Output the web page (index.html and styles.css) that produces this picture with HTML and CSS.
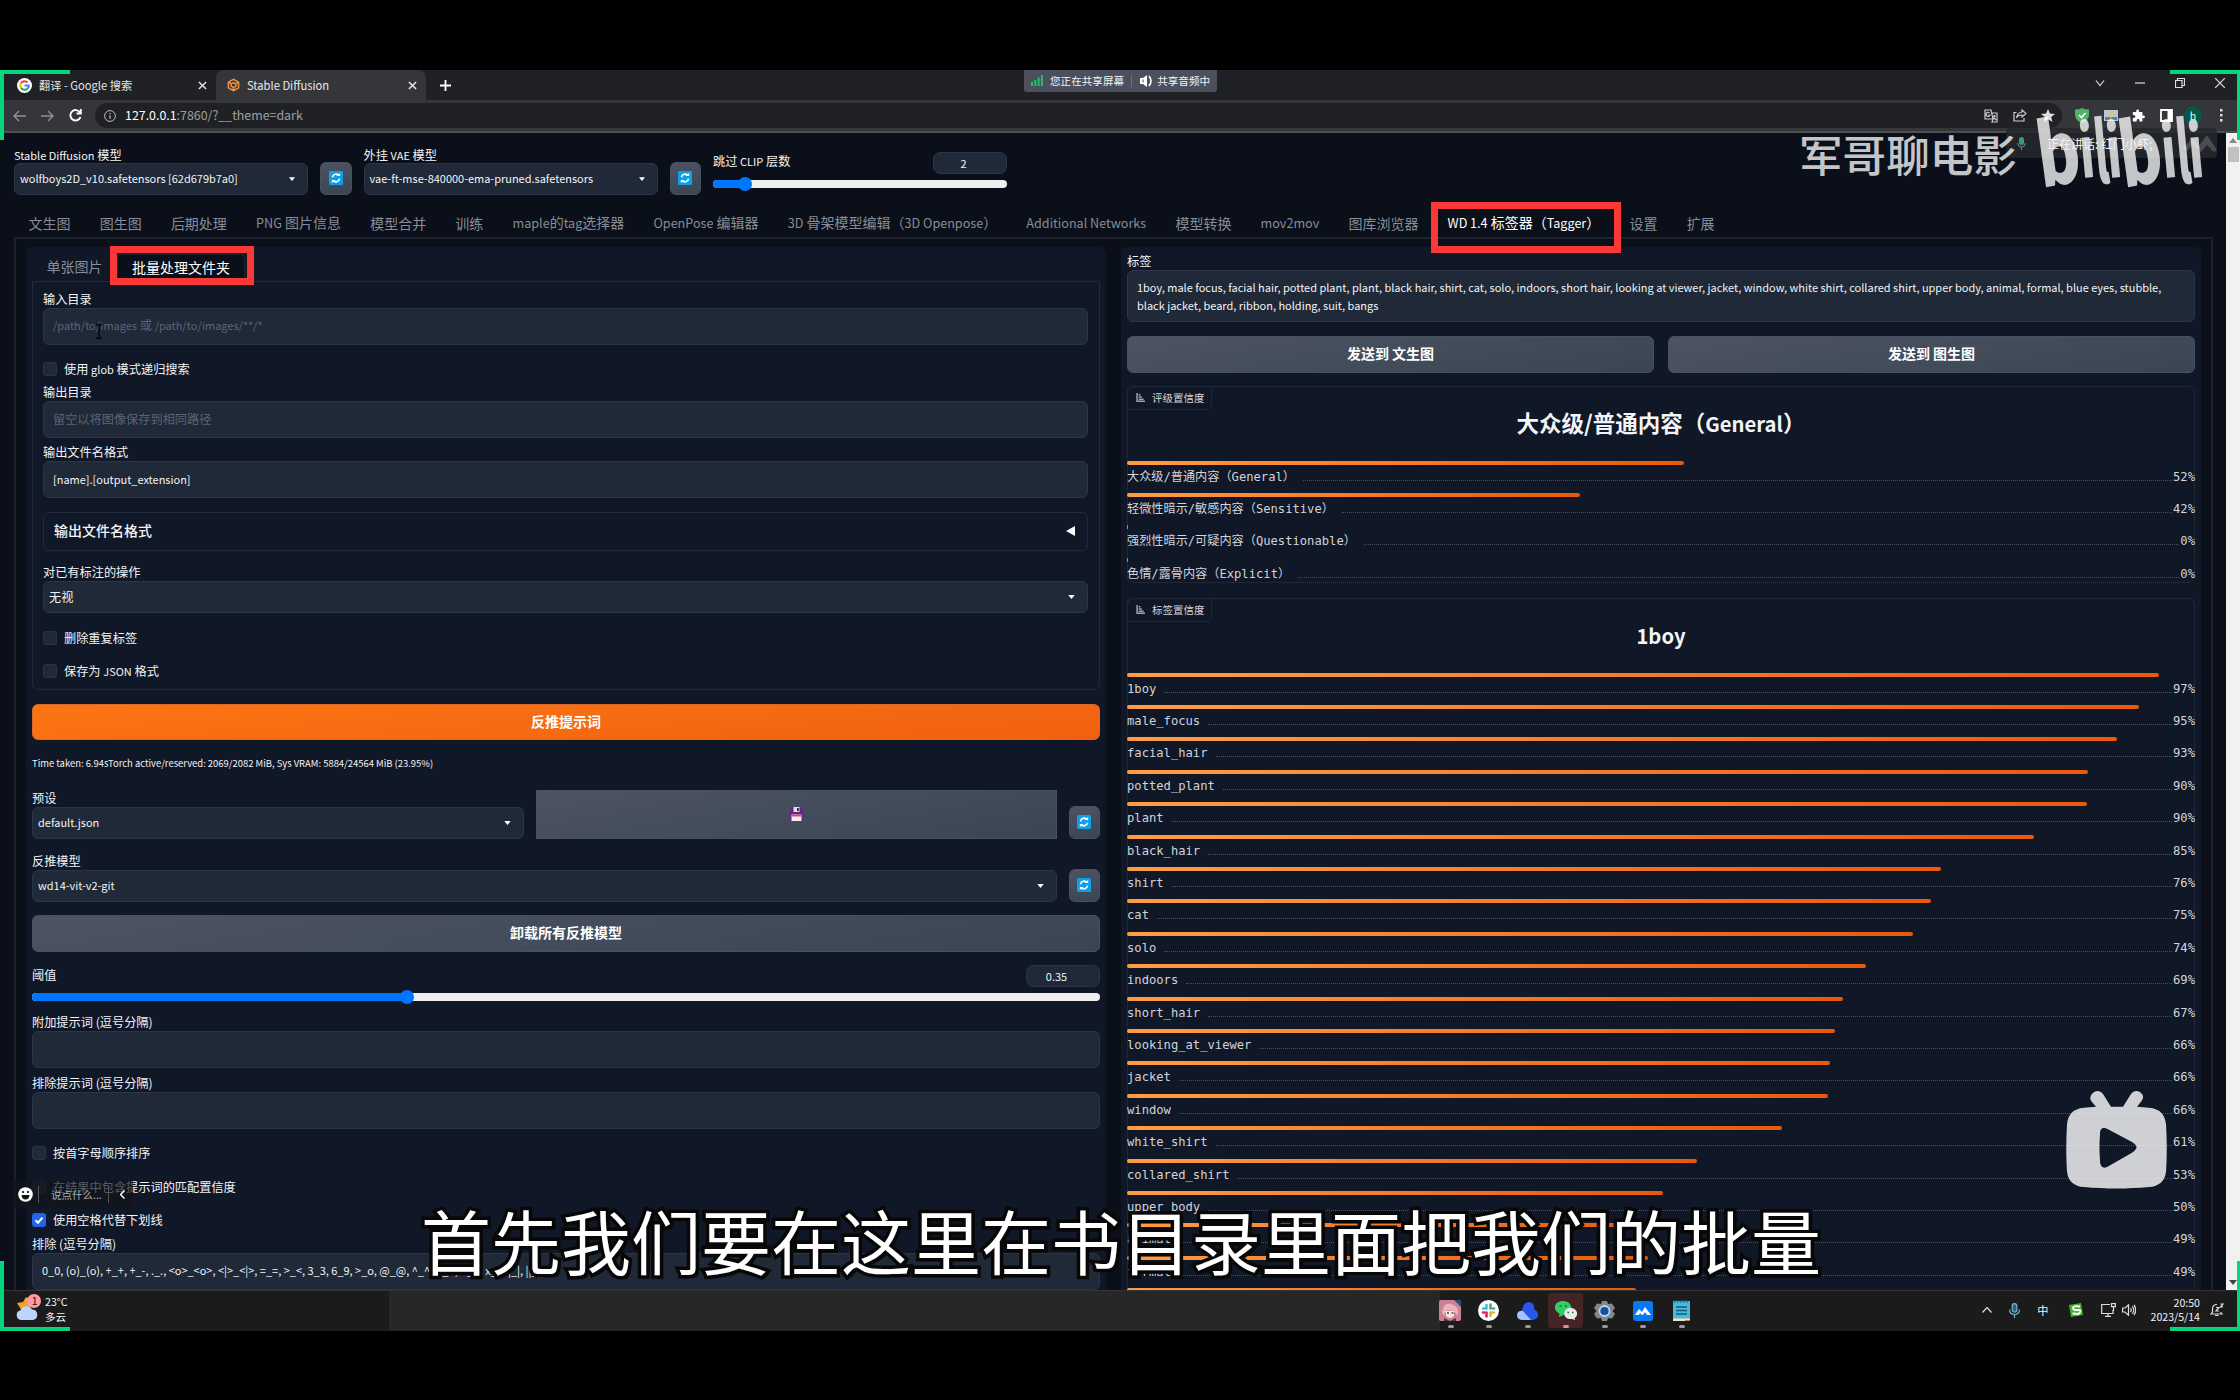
FILE: index.html
```html
<!DOCTYPE html>
<html lang="zh-CN">
<head>
<meta charset="utf-8">
<title>Stable Diffusion</title>
<link rel="stylesheet" href="styles.css">
</head>
<body>
<svg width="0" height="0" class="defs">
  <defs>
    <symbol id="refresh" viewBox="0 0 16 16"><rect width="16" height="16" rx="1.5" fill="#0f9fe8"/><path d="M4 7.2A4.2 4.2 0 0 1 11.5 5.2M12 8.8A4.2 4.2 0 0 1 4.5 10.8" fill="none" stroke="#fff" stroke-width="1.9"/><path d="M8.2 5.8h4.6V2.2zM7.8 10.2H3.2v3.6z" fill="#fff"/></symbol>
    <symbol id="caret" viewBox="0 0 8 5"><path d="M0 0h8L4 5z" fill="#fff"/></symbol>
    <symbol id="chart" viewBox="0 0 10 10"><path d="M1.2 0v9.3H10M3 2h2M3 4.500h3.500M3 7h5.500" fill="none" stroke="#9ca3af" stroke-width="1.7"/></symbol>
    <symbol id="close" viewBox="0 0 10 10"><path d="M1 1l8 8M9 1L1 9" fill="none" stroke="currentColor" stroke-width="1.6"/></symbol>
  </defs>
</svg>
<div class="screen">
  <div class="tabstrip">
    <div class="btab">
      <svg width="15" height="15" viewBox="0 0 16 16"><circle cx="8" cy="8" r="8" fill="#fff"/><g fill="none" stroke-width="2.2"><path d="M4.200 5.600A4.500 4.500 0 0 1 11.200 4.800" stroke="#ea4335"/><path d="M4.200 5.600a4.500 4.500 0 0 0 0 4.800" stroke="#fbbc05"/><path d="M4.200 10.400a4.500 4.500 0 0 0 7 .9" stroke="#34a853"/><path d="M11.200 11.300A4.500 4.500 0 0 0 12.500 8H8" stroke="#4285f4"/></g></svg>
      <span>翻译 - Google 搜索</span><svg class="x" width="9" height="9"><use href="#close"/></svg>
    </div>
    <div class="btab on">
      <svg width="13" height="14" viewBox="0 0 14 14"><path d="M7 1l5.500 3v6L7 13l-5.500-3V4zM7 4.500l2.500 1.300v2.600L7 9.700 4.500 8.400V5.800zM1.500 4l3 1.800M12.500 4l-3 1.800M7 13V9.700" fill="none" stroke="#f59342" stroke-width="1.600"/></svg>
      <span>Stable Diffusion</span><svg class="x" width="9" height="9"><use href="#close"/></svg>
    </div>
    <svg class="plus" width="11" height="11" viewBox="0 0 11 11"><path d="M5.500 0v11M0 5.500h11" stroke="#fff" stroke-width="1.800"/></svg>
    <div class="winctl">
      <svg width="10" height="10" viewBox="0 0 10 10"><path d="M1 2.500l4 5 4-5"/></svg>
      <svg width="10" height="10" viewBox="0 0 10 10"><path d="M0 5h10"/></svg>
      <svg width="10" height="10" viewBox="0 0 10 10"><path d="M.5 2.500h6.500v7H.5zM2.500 2.500V.5h7v7H7"/></svg>
      <svg width="10" height="10" viewBox="0 0 10 10"><path d="M0 0l10 10M10 0L0 10"/></svg>
    </div>
  </div>
  <div class="toolbar">
    <svg class="nav dim" width="13" height="12" viewBox="0 0 13 12"><path d="M13 6H1M6 1L1 6l5 5"/></svg>
    <svg class="nav dim" width="13" height="12" viewBox="0 0 13 12"><path d="M0 6h12M7 1l5 5-5 5"/></svg>
    <svg class="nav" width="13" height="13" viewBox="0 0 13 13"><path d="M11.500 8A5.200 5.200 0 1 1 11 3.500M11.800 0v4.500H7.500" stroke-width="1.900"/></svg>
    <div class="address">
      <svg width="12" height="12" viewBox="0 0 12 12"><path d="M6 5.500v3.300M6 3v1.300" stroke="#bbb" stroke-width="1.300"/><circle cx="6" cy="6" r="5.400" fill="none" stroke="#bbb"/></svg>
      <span><b>127.0.0.1</b>:7860/?__theme=dark</span>
      <div class="addr-icons">
        <svg width="14" height="14" viewBox="0 0 14 14"><path d="M1 1h6l2 9H1zM7 4h6v9H8l1-3M9 7h3M10.500 6v1c0 2-1 3-2 3.500M10 9l2 2M5.500 4A2 2 0 1 0 6 6H4.500" fill="none" stroke="#ccc" stroke-width="1.200"/></svg>
        <svg width="14" height="13" viewBox="0 0 14 13"><path d="M3.500 3.500H1V12h10V9M9 1l4 3.500L9 8V6C6 6 4.500 7 3.500 9 4 5.500 6 3.500 9 3z" fill="none" stroke="#ccc" stroke-width="1.200"/></svg>
        <svg width="14" height="13" viewBox="0 0 14 13"><path d="M7 0l2 4.500 5 .4-3.800 3.200L11.500 13 7 10.300 2.500 13l1.300-4.900L0 4.900l5-.4z" fill="#ddd"/></svg>
      </div>
    </div>
    <div class="ext">
      <svg width="14" height="15" viewBox="0 0 14 15"><path d="M0 1.500Q4 1.500 7 0q3 1.500 7 1.500V7q0 5-7 8Q0 12 0 7z" fill="#52b265"/><path d="M4 7l2.500 2.500L10.500 5" fill="none" stroke="#fff" stroke-width="1.600"/></svg>
      <svg width="14" height="11" viewBox="0 0 14 11"><rect width="14" height="11" fill="#b8c8d0"/><path d="M1 7h12v3H1z" fill="#4e87a8"/><path d="M8 1L5 6h2l-1 4 4-6H8z" fill="#ffc31a"/></svg>
      <svg width="13" height="13" viewBox="0 0 15 14"><path d="M1 3h4c-1-4 4-4 3 0h4v4c4-1 4 4 0 3v4H8.500c1-4-4-4-3 0H1v-4c4 0 4-3.500 0-3.500z" fill="#fff"/></svg>
      <svg width="13" height="13" viewBox="0 0 13 13"><path d="M1 1h11v11H1z" fill="none" stroke="#fff" stroke-width="1.800"/><path d="M7.500 1H12v11H7.500z" fill="#fff"/></svg>
      <span class="avatar">h</span>
      <svg width="3" height="13" viewBox="0 0 3 13"><path d="M0 0h2.500v2.500H0zM0 5h2.500v2.500H0zM0 10h2.500v2.500H0z" fill="#ddd"/></svg>
    </div>
  </div>

  <div class="page">
    <div class="content">
      <div class="quick">
        <div class="field q"><div class="label"><em>Stable Diffusion</em> 模型</div><div class="box select"><em>wolfboys2D_v10.safetensors [62d679b7a0]</em><svg width="6" height="4"><use href="#caret"/></svg></div></div>
        <div class="btn tool"><svg width="14" height="14"><use href="#refresh"/></svg></div>
        <div class="field q"><div class="label">外挂 <em>VAE</em> 模型</div><div class="box select"><em>vae-ft-mse-840000-ema-pruned.safetensors</em><svg width="6" height="4"><use href="#caret"/></svg></div></div>
        <div class="btn tool"><svg width="14" height="14"><use href="#refresh"/></svg></div>
        <div class="range q clip"><div class="range-head"><span class="cap">跳过 <em>CLIP</em> 层数</span><span class="num"><em>2</em></span></div><div class="track"><i style="width:11%"></i></div></div>
      </div>
      <div class="tabs">
        <span>文生图</span><span>图生图</span><span>后期处理</span><span><em>PNG</em> 图片信息</span><span>模型合并</span><span>训练</span><span><em>maple</em>的<em>tag</em>选择器</span><span><em>OpenPose</em> 编辑器</span><span><em>3D</em> 骨架模型编辑（<em>3D Openpose</em>）</span><span><em>Additional Networks</em></span><span>模型转换</span><span><em>mov2mov</em></span><span>图库浏览器</span><span class="on"><em>WD 1.4</em> 标签器（<em>Tagger</em>）<i class="mark mark-main"></i></span><span>设置</span><span>扩展</span>
      </div>
      <div class="columns">
        <div class="col left">
          <div class="subtabs"><span>单张图片</span><span class="on">批量处理文件夹<i class="mark mark-sub"></i></span></div>
          <div class="group">
            <div class="field"><div class="label">输入目录</div><div class="box ph"><span><em>/path/to/images</em> 或 <em>/path/to/images/**/*</em></span><svg class="ibeam" width="8" height="15" viewBox="0 0 8 15"><path d="M1 .7h6M1 14.300h6M4 1v13" stroke="#05070c" stroke-width="1.400"/></svg></div></div>
            <div class="check m175"><i></i><span>使用 <em>glob</em> 模式递归搜索</span></div>
            <div class="field m8"><div class="label">输出目录</div><div class="box ph">留空以将图像保存到相同路径</div></div>
            <div class="field m6"><div class="label">输出文件名格式</div><div class="box"><em>[name].[output_extension]</em></div></div>
            <div class="accordion">输出文件名格式<svg width="9" height="10" viewBox="0 0 9 10"><path d="M9 0v10L0 5z" fill="#fff"/></svg></div>
            <div class="field m13"><div class="label">对已有标注的操作</div><div class="box select">无视<svg width="7" height="4"><use href="#caret"/></svg></div></div>
            <div class="check m18"><i></i>删除重复标签</div>
            <div class="check m19"><i></i><span>保存为 <em>JSON</em> 格式</span></div>
          </div>
          <div class="btn primary m14">反推提示词</div>
          <div class="stats">Time taken: 6.94sTorch active/reserved: 2069/2082 MiB, Sys VRAM: 5884/24564 MiB (23.95%)</div>
          <div class="row m20">
            <div class="field preset"><div class="label">预设</div><div class="box select"><em>default.json</em><svg width="7" height="4"><use href="#caret"/></svg></div></div>
            <div class="btn save"><svg width="13" height="14" viewBox="0 0 13 14"><path d="M0 0h12l1 1.500V14H0z" fill="#5b2a86"/><path d="M3.500 0h6v5h-6z" fill="#e4dff0"/><path d="M7 1h1.800v3H7z" fill="#30204e"/><path d="M1.500 7.500h10V14h-10z" fill="#f3f0f5"/><path d="M1.500 7.500h10v2h-10z" fill="#f0405a"/></svg></div>
            <div class="btn tool"><svg width="14" height="14"><use href="#refresh"/></svg></div>
          </div>
          <div class="row m14">
            <div class="field grow"><div class="label">反推模型</div><div class="box select"><em>wd14-vit-v2-git</em><svg width="7" height="4"><use href="#caret"/></svg></div></div>
            <div class="btn tool"><svg width="14" height="14"><use href="#refresh"/></svg></div>
          </div>
          <div class="btn m13">卸载所有反推模型</div>
          <div class="range m13"><div class="range-head"><span>阈值</span><span class="num"><em>0.35</em></span></div><div class="track"><i style="width:35.100%"></i></div></div>
          <div class="field m13"><div class="label">附加提示词 (逗号分隔)</div><div class="box"></div></div>
          <div class="field m7"><div class="label">排除提示词 (逗号分隔)</div><div class="box"></div></div>
          <div class="check m17"><i></i>按首字母顺序排序</div>
          <div class="check m20"><i></i>在结果中包含提示词的匹配置信度</div>
          <div class="check m195 checked"><i><svg width="14" height="14" viewBox="0 0 14 14"><path d="M3.500 7.200L6 9.700l4.500-5" fill="none" stroke="#fff" stroke-width="2"/></svg></i>使用空格代替下划线</div>
          <div class="field m85"><div class="label">排除 (逗号分隔)</div><div class="box"><em>0_0, (o)_(o), +_+, +_-, ._., &lt;o&gt;_&lt;o&gt;, &lt;|&gt;_&lt;|&gt;, =_=, &gt;_&lt;, 3_3, 6_9, &gt;_o, @_@, ^_^, o_o, u_u, x_x, |_|, ||_||</em></div></div>
        </div>
        <div class="col right">
          <div class="label">标签</div>
          <div class="tagbox"><em>1boy, male focus, facial hair, potted plant, plant, black hair, shirt, cat, solo, indoors, short hair, looking at viewer, jacket, window, white shirt, collared shirt, upper body, animal, formal, blue eyes, stubble,<br>black jacket, beard, ribbon, holding, suit, bangs</em></div>
          <div class="row send"><div class="btn grow">发送到 文生图</div><div class="btn grow">发送到 图生图</div></div>
          <div class="block rating">
            <div class="badge"><svg width="9" height="9"><use href="#chart"/></svg>评级置信度</div>
            <h2>大众级/普通内容（<em>General</em>）</h2>
            <div class="conf"><b style="width:52.200%"></b><p>大众级/普通内容（General）<i></i>52%</p></div>
            <div class="conf"><b style="width:42.400%"></b><p>轻微性暗示/敏感内容（Sensitive）<i></i>42%</p></div>
            <div class="conf"><b style="width:0.100%"></b><p>强烈性暗示/可疑内容（Questionable）<i></i>0%</p></div>
            <div class="conf"><b style="width:0.100%"></b><p>色情/露骨内容（Explicit）<i></i>0%</p></div>
          </div>
          <div class="block tags">
            <div class="badge"><svg width="9" height="9"><use href="#chart"/></svg>标签置信度</div>
            <h2><em>1boy</em></h2>
            <div class="conf"><b style="width:96.600%"></b><p>1boy<i></i>97%</p></div>
            <div class="conf"><b style="width:94.800%"></b><p>male_focus<i></i>95%</p></div>
            <div class="conf"><b style="width:92.700%"></b><p>facial_hair<i></i>93%</p></div>
            <div class="conf"><b style="width:90%"></b><p>potted_plant<i></i>90%</p></div>
            <div class="conf"><b style="width:89.900%"></b><p>plant<i></i>90%</p></div>
            <div class="conf"><b style="width:84.900%"></b><p>black_hair<i></i>85%</p></div>
            <div class="conf"><b style="width:76.200%"></b><p>shirt<i></i>76%</p></div>
            <div class="conf"><b style="width:75.300%"></b><p>cat<i></i>75%</p></div>
            <div class="conf"><b style="width:73.600%"></b><p>solo<i></i>74%</p></div>
            <div class="conf"><b style="width:69.200%"></b><p>indoors<i></i>69%</p></div>
            <div class="conf"><b style="width:67%"></b><p>short_hair<i></i>67%</p></div>
            <div class="conf"><b style="width:66.300%"></b><p>looking_at_viewer<i></i>66%</p></div>
            <div class="conf"><b style="width:65.800%"></b><p>jacket<i></i>66%</p></div>
            <div class="conf"><b style="width:65.600%"></b><p>window<i></i>66%</p></div>
            <div class="conf"><b style="width:61.300%"></b><p>white_shirt<i></i>61%</p></div>
            <div class="conf"><b style="width:53.400%"></b><p>collared_shirt<i></i>53%</p></div>
            <div class="conf"><b style="width:50.200%"></b><p>upper_body<i></i>50%</p></div>
            <div class="conf"><b style="width:49.200%"></b><p>animal<i></i>49%</p></div>
            <div class="conf"><b style="width:48.800%"></b><p>formal<i></i>49%</p></div>
            <div class="conf"><b style="width:47.700%"></b></div>
          </div>
        </div>
      </div>
    </div>
    <div class="scrollbar">
      <svg width="8" height="5" viewBox="0 0 8 5"><path d="M4 0l4 5H0z" fill="#888"/></svg><i></i>
      <svg class="down" width="8" height="5" viewBox="0 0 8 5"><path d="M0 0h8L4 5z" fill="#444"/></svg>
    </div>
  </div>

  <div class="taskbar">
    <div class="weather">
      <svg width="25" height="27" viewBox="0 0 25 27"><path d="M10 3l-3 5-6 1 5 8 8 1V5z" fill="#f5a02c"/><path d="M5 26a5 5 0 0 1-.5-9.800A6.500 6.500 0 0 1 16 15.500a5.300 5.300 0 0 1 1 10.500z" fill="#bcd6fb"/><circle cx="18" cy="7" r="7" fill="#ff99a4"/><text x="15.500" y="11" font-size="11" fill="#222" class="cnt">1</text></svg>
      <div>23°C<br>多云</div>
    </div>
    <div class="tb-mid"></div>
    <div class="apps">
      <div class="app"><svg width="22" height="21" viewBox="0 0 22 21"><rect width="22" height="21" rx="2" fill="#c98291"/><path d="M15 0h7v7z" fill="#2b5268"/><path d="M3 12Q5 2 12 4q8 1 7 12l-4-5-7-1-3 6z" fill="#eeb1bd"/><path d="M7 11h8v5q-4 4-8 0z" fill="#f6e4e2"/><path d="M8 13h2M12.500 13h2" stroke="#543" stroke-width="1.300"/><path d="M5 18l6 3 6-3v3H5z" fill="#493946"/></svg></div>
      <div class="app"><svg width="21" height="21" viewBox="0 0 21 21"><circle cx="10.500" cy="10.500" r="10.500" fill="#fff"/><g stroke-width="2.600" stroke-linecap="round"><path d="M8.500 5v3.500M5 8.500h3.500" stroke="#36c5f0"/><path d="M12.500 4.500v4M16 8.500h-1" stroke="#2eb67d"/><path d="M12.500 16v-3.500M16 12.500h-3.500" stroke="#ecb22e"/><path d="M8.500 16.500v-4M5 12.500h1" stroke="#e01e5a"/></g></svg></div>
      <div class="app"><svg width="21" height="18" viewBox="0 0 21 18"><path d="M5 9Q6 0 12 0q6 1 5 7 4 2 4 6 0 4-5 5H6q-6-1-6-5 1-3 5-4z" fill="#2757ec"/><path d="M0 13q1-5 6-4l8 9H6q-6 0-6-5z" fill="#a8c2ff"/></svg></div>
      <div class="app active"><svg width="22" height="19" viewBox="0 0 22 19"><path d="M8 0c11 0 11 14 1 14l-5 2 .5-3.500C-3 9-1 0 8 0z" fill="#32cd64"/><path d="M15 7c8 0 9 8 4.500 10l.5 2-3-1C7 19 7 7 15 7z" fill="#e9e9e9"/><path d="M4.500 5h2M10 5h2M12.500 11.500H14M17 11.500h1.500" stroke="#186b36" stroke-width="1.600"/></svg></div>
      <div class="app"><svg width="21" height="20" viewBox="0 0 21 20"><path d="M8 0h5l1 3 4-.5 3 4.500-2.500 3L21 13l-3 4.500-4-.5-1 3H8l-1-3-4 .5L0 13l2.500-3L0 7l3-4.500L7 3z" fill="#83888f"/><circle cx="10.500" cy="10" r="5" fill="#174f9b" stroke="#bcd5ed" stroke-width="1.800"/></svg></div>
      <div class="app"><svg width="20" height="20" viewBox="0 0 20 20"><rect width="20" height="20" rx="3" fill="#0879f4"/><path d="M2 14l4-6 3 3 3-5 6 8h-4l-2-3-2 3H9l-2-2-1 2z" fill="#fff"/></svg></div>
      <div class="app"><svg width="17" height="21" viewBox="0 0 17 21"><path d="M0 1h17v18H0z" fill="#48b9da"/><path d="M0 18.500h17V21H0z" fill="#f5e4c2"/><path d="M12 20.500h5" stroke="#d9782b"/><path d="M3 7h11M3 10.500h11M3 14h11" stroke="#145a78" stroke-width="1.500"/><path d="M1 1h15" stroke="#156384" stroke-width="3" stroke-dasharray="1.500 1.500"/></svg></div>
    </div>
    <div class="tray">
      <svg width="10" height="6" viewBox="0 0 10 6"><path d="M.5 5.500l4.500-5 4.500 5"/></svg>
      <svg width="11" height="15" viewBox="0 0 11 15"><g stroke="#71b4d4"><rect x="3.200" y=".6" width="4.600" height="8.500" rx="2.300" fill="#315f78"/><path d="M.6 6.500q0 5 4.900 5t4.900-5M5.500 12v3"/></g></svg>
      <span>中</span>
      <svg width="14" height="14" viewBox="0 0 14 14"><path d="M0 2L12 0l2 12-12 2z" fill="#3fb529" stroke="none"/><path d="M11 3.500Q4 2.500 4 5t5 2 .5 4l-6-.5" stroke="#fff" stroke-width="1.900"/></svg>
      <svg width="15" height="14" viewBox="0 0 15 14"><path d="M9 1.500H.7v9H12V7M4 13.300h6M7 10.500v3M10.500.6h3.900v3h-3.900zM12.500 3.600V8"/></svg>
      <svg width="14" height="12" viewBox="0 0 14 12"><path d="M.6 4h2.500L6.500.8v10.400L3 8H.6zM8.500 4q1.500 2 0 4M10.300 2.300q3 3.700 0 7.400M12 .8q3.500 5.200 0 10.400"/></svg>
      <div class="clock">20:50<br>2023/5/14</div>
      <svg width="14" height="14" viewBox="0 0 14 14"><path d="M7 1.500Q2.500 1.500 2.500 6v3L1 11h11l-1.500-2M5 12.500h3.500M6 4.500h3L6 8h3M10.500 1h2.500l-2.500 3H13"/></svg>
    </div>
  </div>

  <div class="share">
    <svg width="12" height="11" viewBox="0 0 12 11"><path d="M0 7h2v4H0zM3.300 5h2v6h-2zM6.600 2.500h2V11h-2zM9.900 0h2v11h-2z" fill="#1fc266"/></svg><span>您正在共享屏幕</span><i></i>
    <svg width="13" height="12" viewBox="0 0 13 12"><path d="M0 3h3l4-3v12L3 9H0z" fill="#fff"/><path d="M9 1q4 5 0 10" fill="none" stroke="#fff" stroke-width="1.600"/><path d="M3 4.500v3" stroke="#4b4f5e"/></svg><span>共享音频中</span>
  </div>
  <div class="speaking"><svg width="9" height="13" viewBox="0 0 9 13"><rect x="2" width="5" height="8" rx="2.500" fill="#3c9c72"/><path d="M.6 6q0 4 3.900 4t3.900-4M4.500 10v3" fill="none" stroke="#7b8588"/></svg><svg class="peak" width="34" height="17" viewBox="0 0 34 17"><path d="M0 13l9-9 7 7L24 0l10 15-3 2-7-7-6 7-9-7-5 6z" fill="#4b4c50"/></svg></div>
  <div class="author">军哥聊电影</div>
  <div class="brand"><span class="b">b</span><span class="i1">i</span><span class="l1">l</span><span class="i1">i</span><span class="b b2">b</span><span class="i1">i</span><span class="l1">l</span><span class="i1">i</span></div>
  <div class="speaker">正在讲话: 红门小虾;</div>
  <svg class="tv" width="104" height="99" viewBox="0 0 104 101" preserveAspectRatio="none"><path fill-rule="evenodd" d="M27 3c3-4 8-4 11 0l8 13h12l8-13c3-4 8-4 11 0 2 3 1 5-1 8l-4 5 12 1c11 1 16 7 17 17 1 16 1 33 0 48-1 10-7 15-17 16-22 2-43 2-65 0C9 97 3 92 2 82 1 67 1 50 2 34c1-10 6-16 17-17l12-1-5-6c-1-2-1-5 1-7zM43 39c-6-3-8 0-8 5-.7 9-.7 18 0 27 0 6 3 9 8 6l24-14c6-4 6-7 0-11z" fill="#fff" fill-opacity=".8"/></svg>
  <div class="chat"><svg width="15" height="15" viewBox="0 0 15 15"><circle cx="7.500" cy="7.500" r="7.300" fill="#fff"/><path d="M3.500 8h8q-.5 4.500-4 4.500T3.500 8z" fill="#111"/><circle cx="5" cy="5" r="1.100"/><circle cx="10" cy="5" r="1.100"/></svg><i></i><span>说点什么...</span><i></i><svg width="5" height="9" viewBox="0 0 5 9"><path d="M4.500.5l-4 4 4 4" fill="none" stroke="#fff" stroke-width="1.500"/></svg></div>
  <div class="subtitle">首先我们要在这里在书目录里面把我们的批量</div>
  <div class="corner tl"></div><div class="corner tr"></div><div class="corner bl"></div><div class="corner br"></div>
</div>
</body>
</html>
```

FILE: styles.css
```css
*{box-sizing:border-box}
body{margin:0;width:2240px;height:1400px;background:#000;overflow:hidden;padding-top:70px;font:12.2px/17px "Noto Sans CJK SC",sans-serif;color:#f3f4f6}
svg{display:block;flex:none}
.defs{position:absolute}
.screen{position:relative;width:2240px;height:1261px;display:flex;flex-direction:column;background:#0b0f19;overflow:hidden}
i{font-style:normal}
em{font-style:normal;font-size:.9em}
.grow{flex:1}
/* browser chrome */
.tabstrip{height:30px;flex:none;background:#202124;display:flex;align-items:center;padding-left:6px}
.btab{width:210px;height:30px;display:flex;align-items:center;padding:0 9px 0 11px;font-size:11.2px;gap:7px;color:#e4e5e7}
.btab .x{margin-left:auto}
.btab.on{background:#35363a;border-radius:8px 8px 0 0;color:#e8eaed}
.plus{margin-left:14px}
.winctl{margin-left:auto;display:flex;gap:30px;padding:0 15px 4px 0}
.winctl path{fill:none;stroke:#ddd;stroke-width:1.2}
.toolbar{height:33px;flex:none;background:#35363a;border-bottom:2px solid #4c4e53;display:flex;align-items:center;padding-left:13px}
.nav{margin-right:15px;color:#fff}
.nav path{fill:none;stroke:#fff;stroke-width:1.400}
.nav path[stroke-width]{stroke-width:1.9}
.dim{opacity:.45}
.address{width:1967px;height:25px;margin-left:-2px;border-radius:13px;background:#202124;display:flex;align-items:center;padding:0 7px 0 9px;gap:9px;font-size:12.4px;color:#9aa0a6}
.address b{font-weight:400;color:#fff}
.addr-icons{margin-left:auto;display:flex;gap:14.500px}
.ext{display:flex;align-items:center;gap:14.500px;margin-left:13px}
.avatar{width:18px;height:18px;border-radius:9px;background:#04594c;font-size:10.500px;line-height:18px;text-align:center;margin:0 3px 0 -3px}
/* page */
.page{height:1157px;flex:none;display:flex;overflow:hidden;background:#0b0f19}
.content{width:2226px;padding:13px 13px 0 14px}
.quick{display:flex;gap:12px;height:49px;align-items:flex-end}
.q{width:294px}
.tool{width:31.500px;height:33px!important;flex:none}
.label{height:17px;white-space:nowrap}
.quick .label{position:relative;top:1px}
.box{height:37px;border:1px solid #2b3547;border-radius:6px;background:#1f2937;padding:0 9px;display:flex;align-items:center;white-space:nowrap;overflow:hidden;position:relative}
.box>em,.box>span{margin-top:-1px}
.select{height:32px;padding:0 12px 0 5px}
.select svg{margin-left:auto}
.ph{color:#5b6576}
.ibeam{position:absolute;left:51px;top:15px}
.btn{height:36.500px;border-radius:6px;background:linear-gradient(170deg,#4d5363,#394652);border:1px solid #475160;font-size:14px;line-height:20px;padding-bottom:2px;font-weight:700;display:flex;align-items:center;justify-content:center;color:#fff}
.primary{height:36px;background:linear-gradient(175deg,#fc7614,#f06010);border-color:#d8692a}
.range-head{height:22px;display:flex;justify-content:space-between;align-items:center}
.cap{position:relative;top:-2px}
.num{width:74px;height:22px;border-radius:7px;border:1px solid #2b3547;background:#1f2937;line-height:20px;text-align:center;padding-right:13px}
.track{height:8px;margin-top:6px;border-radius:4px;background:#efefef}
.track i{display:block;height:8px;border-radius:4px;background:#0075ff;position:relative}
.track i::after{content:"";position:absolute;right:-7px;top:-3px;width:14px;height:14px;border-radius:7px;background:#0075ff}
.clip{height:43px}
.tabs{display:flex;height:42px;align-items:flex-end;padding:0 0 4px 14.500px;gap:29.200px;font-size:14px;line-height:20px;color:#868d9a;white-space:nowrap}
.tabs .on,.subtabs .on{color:#fff;position:relative}
.mark{position:absolute;border:7px solid #fb3836;z-index:2}
.mark-main{left:-17px;top:-10px;width:190px;height:51px}
.columns{height:1070px;border:2px solid #1b212d;border-bottom:0;display:flex;gap:15px;padding:8px 10px 0}
.col{width:1080px;background:#101727;border-radius:6px 6px 0 0;padding:0 6px}
.left{padding-top:7px}
.subtabs{display:flex;height:27px;font-size:14px;color:#868d9a;line-height:25px}
.subtabs>span{padding:0 14.500px}
.subtabs .on{border:1px solid #1c2433;border-bottom:0;background:#0b0f19;border-radius:5px 5px 0 0;padding:0 14px;line-height:24px}
.mark-sub{left:-8px;top:-9px;width:144px;height:39px}
.group{height:409px;border:1px solid #222b3a;border-radius:0 0 6px 6px;padding:8.500px 11px 0 10px}
.check{height:14px;display:flex;align-items:center;gap:7px;line-height:14px}
.check i{width:14px;height:14px;border-radius:3px;background:#1f2937;border:1px solid #2b3547}
.checked i{background:#2563eb;border:0}
.m6{margin-top:6px}.m7{margin-top:7px}.m8{margin-top:8px}.m85{margin-top:8.500px}.m13{margin-top:13px}.m14{margin-top:14px}.m17{margin-top:17px}.m175{margin-top:17.500px}.m18{margin-top:18px}.m19{margin-top:19px}.m195{margin-top:19.500px}.m20{margin-top:20px}
.accordion{margin-top:14px;height:39px;border:1px solid #222b3a;border-radius:6px;display:flex;justify-content:space-between;align-items:center;padding:0 12px 2px 10px;font-size:14px;font-weight:500}
.stats{margin-top:16px;height:14px;font-size:9.430px;line-height:14px}
.row{display:flex;gap:12px;align-items:flex-end}
.preset{width:491.500px}
.save{height:49px;flex:1;border-radius:0}
.right{padding-top:6px}
.tagbox{height:52px;border:1px solid #2b3547;border-radius:6px;background:#1f2937;padding:8px 9px;line-height:17.500px;white-space:nowrap}
.send{margin-top:14px;gap:14px}
.block{border:1px solid #202838;border-radius:6px;position:relative}
.rating{margin-top:13.500px;height:197px}
.tags{margin-top:15px;height:720px;border-bottom:0}
.badge{position:absolute;left:-1px;top:-1px;width:85px;height:23.500px;border:1px solid #202838;border-radius:6px 0 6px 0;display:flex;align-items:center;gap:7px;padding-left:8px;font-size:10.500px;color:#d1d5db}
h2{margin:0;height:73.500px;padding-top:18.500px;line-height:32px;font-size:22.500px;font-weight:700;text-align:center}
.conf{height:32.420px;margin:0 -1px}
.conf b{display:block;height:4px;border-radius:2px;background:linear-gradient(90deg,#ff9d45,#ea580c)}
.conf p{margin:4px 0 0;height:16px;line-height:16px;display:flex;font-family:"DejaVu Sans Mono","Noto Sans CJK SC",monospace;font-size:12.170px;color:#d1d5db}
.conf i{flex:1;margin:0 1px 4px 8px;border-bottom:1px dotted #465062}
.scrollbar{width:14px;background:#f1f1f1;display:flex;flex-direction:column;align-items:center;padding:5px 0}
.scrollbar i{width:11px;height:15px;background:#c1c1c1;margin-top:4px}
.down{margin-top:auto}
/* taskbar */
.taskbar{height:41px;flex:none;display:flex;background:#1b1b1b;border-top:1px solid #343434}
.weather{width:389px;display:flex;gap:4px;padding:3px 0 0 16px;font-size:10.600px;line-height:15px}
.cnt{font-family:"Noto Sans CJK SC",sans-serif}
.tb-mid{width:1051px;background:#272727}
.apps{display:flex;gap:3.600px;margin-left:-7.500px}
.app{width:35px;height:35px;margin-top:2px;border-radius:3px;display:flex;align-items:center;justify-content:center;position:relative}
.app::after{content:"";position:absolute;bottom:0;left:15px;width:6px;height:3px;border-radius:2px;background:#999}
.active{background:#442425}
.active::after{background:#f08a96}
.tray{margin-left:auto;display:flex;align-items:center;padding:0 16px 2px 0;font-size:11.200px}
.tray>svg{fill:none;stroke:#ddd;stroke-width:1.200;margin-right:17px}
.tray span{margin:0 20px 0 0}
.tray>svg:nth-of-type(4){margin-right:6px}
.tray>svg:nth-of-type(3){margin-right:18px}
.tray>svg:nth-of-type(5){margin-right:15px}
.tray>svg:last-child{margin:0 0 0 10px}
.clock{text-align:right;line-height:14.500px;font-size:10.600px}
/* overlays */
.share{position:absolute;left:1024px;top:0;width:193px;height:21.500px;background:#4b4f5e;border-radius:0 0 3px 3px;display:flex;align-items:center;padding-left:7px;font-size:10.600px}
.share span{margin-left:7px;white-space:nowrap}
.share i{width:1px;height:12px;background:#6b6f7d;margin:0 8px 0 7px}
.share i+svg+span{margin-left:4px}
.speaking{position:absolute;left:2006px;top:58px;width:211px;height:30px;border-radius:4px;background:rgba(38,40,44,.85);display:flex;align-items:center;padding-left:11px}
.peak{margin-left:auto}
.speaker{position:absolute;left:2047px;top:65px;font-size:12px;white-space:nowrap}
.author{position:absolute;left:1799px;top:53px;font-size:43.600px;line-height:60px;font-weight:500;color:#fff;opacity:.76;white-space:nowrap}
.brand{position:absolute;left:2037px;top:40px;height:84px;display:flex;align-items:flex-end;color:#fff;opacity:.76;font:900 62px/84px "Noto Sans CJK SC",sans-serif;transform:scaleY(1.140);transform-origin:50% 78px}
.brand span{display:block;width:15px}
.brand .b{width:40px;transform:rotate(-9deg) scale(1.050,1.230)}
.brand .i1{transform:rotate(-6deg) scale(.72,1)}
.brand .l1{width:12px;transform:rotate(-6deg) scale(.65,1.200)}
.tv{position:absolute;left:2065px;top:1021px}
.chat{position:absolute;left:12px;top:1110px;width:121px;height:29px;background:rgba(17,21,29,.7);display:flex;align-items:center;padding-left:6px;font-size:11px;color:#a9adb4}
.chat i{width:1px;height:17px;background:#555;margin:0 12px 0 5px}
.chat span{width:50px;white-space:nowrap;font-size:10.500px}
.chat span+i{margin:0 11px 0 7px}
.subtitle{position:absolute;left:421px;top:1120px;font-size:70px;line-height:100px;white-space:nowrap;color:#fff;-webkit-text-stroke:7px #080808;paint-order:stroke fill;text-shadow:3px 3px 1px #080808}
.corner{position:absolute;width:70px;height:70px;border:0 solid #05d67c}
.tl{left:0;top:0;border-width:4px 0 0 4px}
.tr{right:0;top:0;border-width:4px 3px 0 0}
.bl{left:0;bottom:0;border-width:0 0 4px 4px}
.br{right:0;bottom:0;border-width:0 3px 4px 0}
```
